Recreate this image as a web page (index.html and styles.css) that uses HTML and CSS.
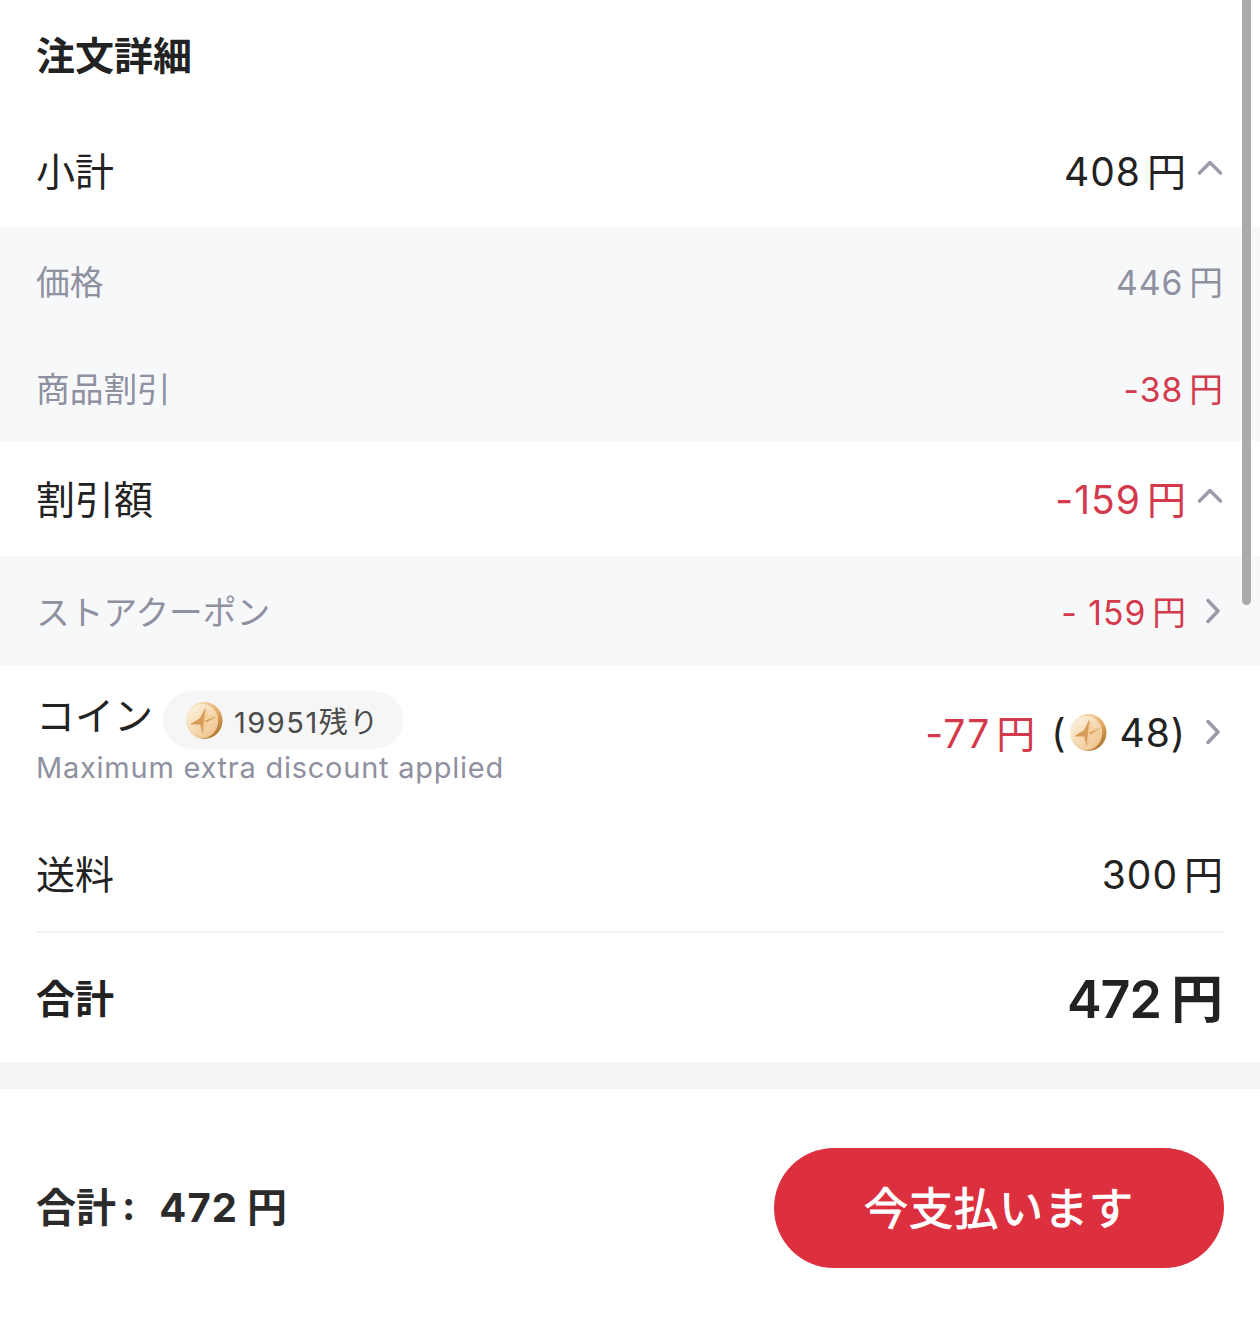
FILE: index.html
```html
<!DOCTYPE html>
<html lang="ja">
<head>
<meta charset="utf-8">
<title>注文詳細</title>
<link rel="stylesheet" href="styles.css">
</head>
<body>
<svg class="defs" width="0" height="0" aria-hidden="true">
  <defs>
    <linearGradient id="rim" x1="0.1" y1="0.1" x2="0.9" y2="0.9">
      <stop offset="0" stop-color="#f9e3bd"/>
      <stop offset="0.6" stop-color="#e3ab66"/>
      <stop offset="1" stop-color="#a96f2b"/>
    </linearGradient>
    <linearGradient id="face" x1="0.1" y1="0.1" x2="0.8" y2="0.9">
      <stop offset="0" stop-color="#fcf1de"/>
      <stop offset="1" stop-color="#f0c690"/>
    </linearGradient>
    <symbol id="coin" viewBox="0 0 40 40">
      <ellipse cx="21" cy="20" rx="18.5" ry="19" fill="url(#rim)"/>
      <ellipse cx="19" cy="20.500" rx="16" ry="17.500" fill="url(#face)"/>
      <path d="M22 6.500 L24.500 16.500 L33 16 L24 21.500 L19 34 L16.500 24 L6 24 L16.500 17.500 Z" fill="#d79c57"/>
      <path d="M22 6.500 L24.500 16.500 L33 16 L20.500 20.500 Z M19 34 L24 21.500 L20.500 20.500 Z" fill="#f3d09c"/>
    </symbol>
  </defs>
</svg>
<main class="page">
  <h1 class="title">注文詳細</h1>

  <div class="row row-main">
    <span>小計</span>
    <span class="value"><span class="amt">408<i class="yen">円</i></span><svg class="chev" viewBox="0 0 28 18"><path d="M3.500 15 L14 4.500 L24.500 15"/></svg></span>
  </div>
  <div class="sub-block">
    <div class="row row-sub row-tall">
      <span>価格</span>
      <span class="amt">446<i class="yen">円</i></span>
    </div>
    <div class="row row-sub row-tall">
      <span>商品割引</span>
      <span class="amt red">-38<i class="yen">円</i></span>
    </div>
  </div>

  <div class="row row-main row-disc">
    <span>割引額</span>
    <span class="value"><span class="amt red">-159<i class="yen">円</i></span><svg class="chev" viewBox="0 0 28 18"><path d="M3.500 15 L14 4.500 L24.500 15"/></svg></span>
  </div>
  <div class="sub-block">
    <div class="row row-sub row-coupon">
      <span>ストアクーポン</span>
      <span class="value"><span class="amt red">- 159<i class="yen">円</i></span><svg class="arrow" viewBox="0 0 14 26"><path d="M2 2.500 L12 13 L2 23.500"/></svg></span>
    </div>
  </div>

  <div class="row row-coin">
    <div class="coin-left">
      <div class="coin-top">
        <span class="coin-label">コイン</span>
        <span class="pill"><svg class="coin"><use href="#coin"/></svg>19951残り</span>
      </div>
      <div class="note">Maximum extra discount applied</div>
    </div>
    <span class="value coin-value"><span class="amt red amt-coin">-77<i class="yen">円</i></span><span class="paren">(<svg class="coin"><use href="#coin"/></svg> 48)</span><svg class="arrow" viewBox="0 0 14 26"><path d="M2 2.500 L12 13 L2 23.500"/></svg></span>
  </div>

  <div class="row row-main row-ship">
    <span>送料</span>
    <span class="amt">300<i class="yen">円</i></span>
  </div>
  <div class="row row-total">
    <span>合計</span>
    <span class="total-amt">472<i class="yen">円</i></span>
  </div>

  <div class="band"></div>

  <footer class="footer">
    <div class="foot-total">合計<span class="foot-colon">:</span><span class="foot-num">472<i class="yen">円</i></span></div>
    <button class="pay" type="button"><span class="pay-label">今支払います</span></button>
  </footer>
</main>
<div class="scrollbar"></div>
</body>
</html>
```

FILE: styles.css
```css
* { box-sizing: border-box; }
html, body { margin: 0; padding: 0; background: #fff; }
body {
  font-family: Inter, "Noto Sans CJK JP", sans-serif;
  color: #222;
  height: 1321px;
  overflow: hidden;
}
.defs { position: absolute; }
.page { width: 1260px; }
.title {
  margin: 0;
  height: 114px;
  padding: 0 0 8px 36px;
  display: flex;
  align-items: center;
  font-size: 39px;
  font-weight: 700;
  color: #222;
}
.row {
  display: flex;
  align-items: center;
  justify-content: space-between;
  padding: 0 37px 0 36px;
}
.row-main { height: 113px; padding-bottom: 4px; font-size: 39px; }
.row-disc { height: 115px; }
.row-ship { height: 115px; }
.sub-block { background: #f7f8fa; }
.row-sub { font-size: 33.700px; color: #8f90a0; }
.row-tall { height: 107px; }
.row-coupon { height: 109px; }
.value { display: flex; align-items: center; }
.amt { letter-spacing: 1px; white-space: nowrap; }
.amt-coin { margin-top: -2px; }
.yen { font-style: normal; margin-left: 6px; letter-spacing: 0; }
.red { color: #d33a4c; }
.chev { width: 28px; height: 18px; margin-left: 10px; margin-right: -1px; margin-top: -4px; }
.chev path, .arrow path {
  fill: none;
  stroke: #9a9aaa;
  stroke-width: 3.500;
  stroke-linecap: round;
  stroke-linejoin: round;
}
.arrow { width: 14px; height: 26px; margin-left: 20px; margin-right: 3px; }
.row-coin { height: 151px; align-items: flex-start; padding-top: 26px; }
.coin-label { font-size: 39px; line-height: 50px; margin-bottom: 8px; color: #222; }
.coin-top { display: flex; align-items: center; gap: 10px; }
.pill {
  display: flex;
  align-items: center;
  height: 58px;
  padding: 0 23px 0 21px;
  border-radius: 29px;
  background: #f6f6f6;
  font-size: 29px;
  color: #4b4b4b;
  letter-spacing: 1.500px;
}
.coin { width: 39px; height: 39px; flex: none; }
.pill .coin { margin-right: 11px; }
.note {
  font-size: 29px;
  line-height: 40px;
  color: #8f90a0;
  letter-spacing: 0.750px;
  margin: -1px 0 0 0;
  white-space: nowrap;
}
.coin-value { font-size: 39px; margin-top: 14px; }
.paren { display: inline-flex; align-items: center; margin-left: 16px; color: #222; letter-spacing: 1px; white-space: pre; }
.paren .coin { margin: 0 0 0 2px; }
.row-total {
  height: 131px;
  margin: 0 36px;
  padding: 0 1px 4px 0;
  border-top: 2px solid #f1f1f3;
  font-size: 39px;
  font-weight: 700;
}
.total-amt { font-size: 52px; font-weight: 600; letter-spacing: -1px; color: #222; }
.total-amt .yen { margin-left: 10px; }
.band { height: 27px; background: #f5f5f5; }
.footer {
  height: 232px;
  padding: 59px 36px 0 36px;
  display: flex;
  justify-content: space-between;
  align-items: flex-start;
}
.foot-total {
  height: 120px;
  padding-bottom: 6px;
  display: flex;
  align-items: center;
  font-size: 40px;
  font-weight: 700;
  color: #2b2b2b;
  white-space: pre;
}
.foot-colon { margin: 0 24px 0 6px; }
.foot-num { letter-spacing: 1px; }
.foot-num .yen { margin-left: 9px; }
.pay {
  width: 450px;
  height: 120px;
  border: 0;
  border-radius: 62px;
  background: #dd303f;
  color: #fff;
  font-family: inherit;
  font-size: 44px;
  letter-spacing: 1px;
  padding: 0 0 5px;
  -webkit-text-stroke: 1px #fff;
}
.scrollbar {
  position: absolute;
  top: 0;
  left: 1242px;
  width: 9px;
  height: 605px;
  border-radius: 0 0 5px 5px;
  background: #aaaaaa;
}
```
